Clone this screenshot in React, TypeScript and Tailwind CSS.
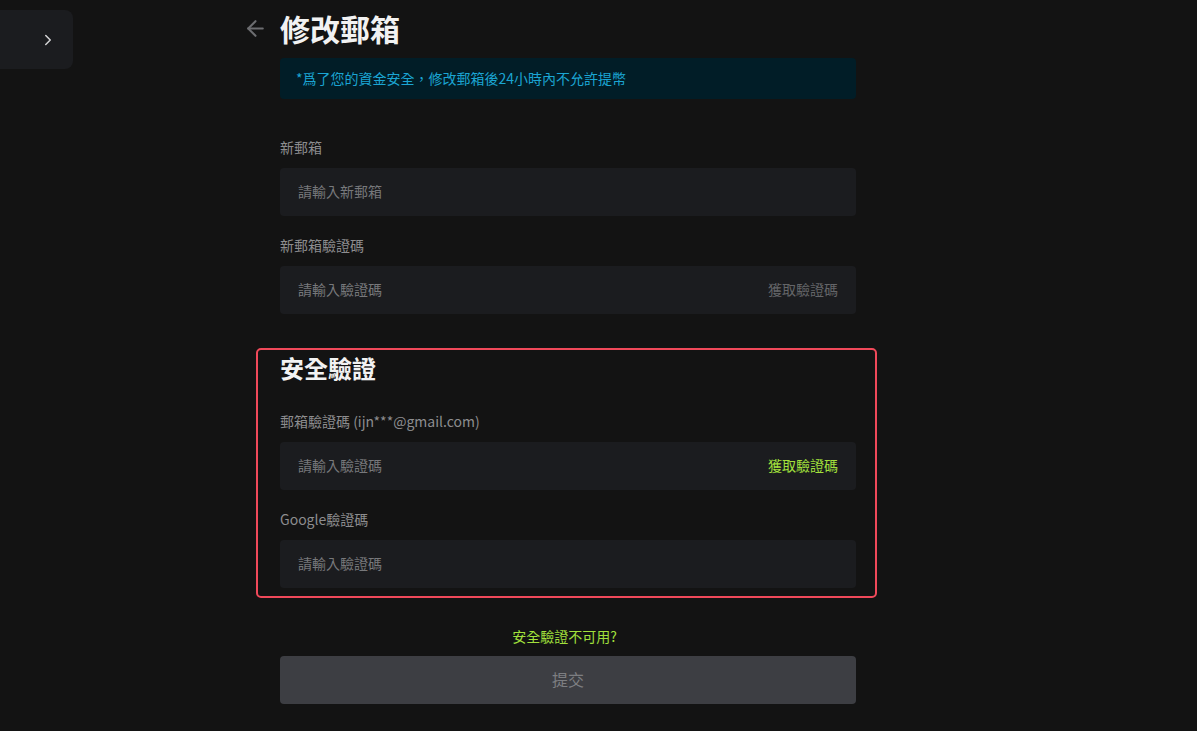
import { ArrowLeft, ChevronRight } from "lucide-react";

const font = { fontFamily: '"Noto Sans CJK TC", "Noto Sans", sans-serif' };

function Field({ label, placeholder, action, actionClass }: { label: string; placeholder: string; action?: string; actionClass?: string }) {
  return (
    <div>
      <div className="text-sm leading-[18px] text-[#8d8d8f]">{label}</div>
      <div className="mt-[12px] flex h-12 items-center justify-between rounded bg-[#1b1c1f] px-[18px] pb-[3px] text-sm">
        <span className="text-[#77787b]">{placeholder}</span>
        {action && <span className={actionClass}>{action}</span>}
      </div>
    </div>
  );
}

export default function App() {
  return (
    <div className="min-h-[731px] w-full bg-[#131313]" style={font}>
      <div className="flex">
        <div className="pt-[10px]">
          <div className="flex h-[59px] w-[73px] items-center justify-end rounded-r-lg bg-[#1b1c1f] pr-[16px]">
            <ChevronRight className="h-[18px] w-[18px] text-[#d4d4d6]" strokeWidth={2} />
          </div>
        </div>
        <div className="ml-[207px] w-[576px]">
          <div className="relative flex h-[56px] items-center">
            <ArrowLeft className="absolute left-[-37px] top-[16px] h-[25px] w-[25px] text-[#6c6d70]" strokeWidth={2} />
            <h1 className="text-[30px] font-bold leading-none text-[#f2f2f2]">修改郵箱</h1>
          </div>
          <div className="mt-[2px] flex h-[41px] items-center rounded bg-[#011d27] px-4 pb-[2px] text-sm text-[#1ba5d3]">
            *爲了您的資金安全，修改郵箱後24小時內不允許提幣
          </div>

          <div className="mt-[39px] flex flex-col gap-5">
            <Field label="新郵箱" placeholder="請輸入新郵箱" />
            <Field label="新郵箱驗證碼" placeholder="請輸入驗證碼" action="獲取驗證碼" actionClass="text-[#646568]" />
          </div>

          <div className="ml-[-24px] mr-[-21px] mt-[34px] rounded-[5px] border-2 border-[#f0495a] pb-2 pl-[22px] pr-[19px] pt-[3px]">
            <h2 className="text-[24px] font-bold leading-[30px] text-[#f2f2f2]">安全驗證</h2>
            <div className="mt-[29px] flex flex-col gap-5">
              <Field label="郵箱驗證碼 (ijn***@gmail.com)" placeholder="請輸入驗證碼" action="獲取驗證碼" actionClass="text-[#a2e03c]" />
              <Field label="Google驗證碼" placeholder="請輸入驗證碼" />
            </div>
          </div>

          <div className="mt-[29px] pr-[7px] text-center text-sm leading-[18px] text-[#a2e03c]">安全驗證不可用?</div>
          <button className="mt-[11px] flex h-12 w-full items-center justify-center rounded bg-[#3d3e43] pb-[3px] text-base text-[#7d7e82]">
            提交
          </button>
        </div>
      </div>
    </div>
  );
}
